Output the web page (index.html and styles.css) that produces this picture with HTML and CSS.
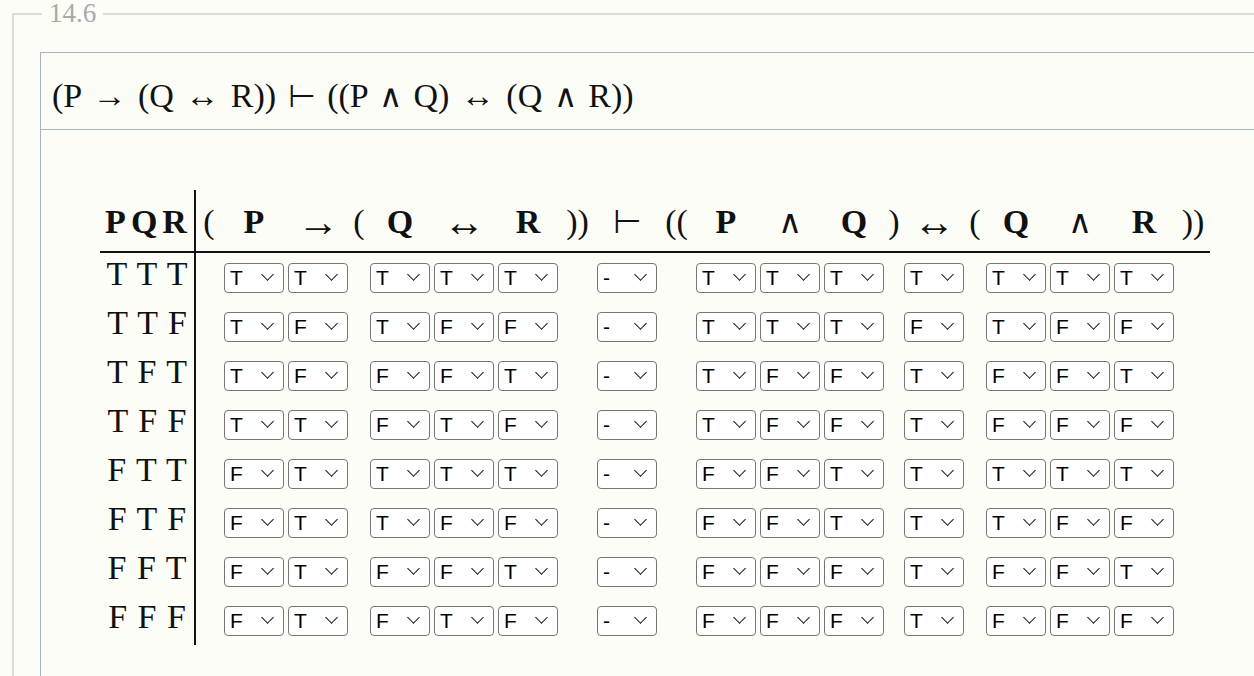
FILE: index.html
```html
<!DOCTYPE html>
<html>
<head>
<meta charset="utf-8">
<link rel="stylesheet" href="styles.css">
</head>
<body>
<fieldset class="problem">
  <legend class="num">14.6</legend>
  <div class="card">
    <div class="card-head">(P → (Q ↔ R)) <span class="sym">⊢</span> ((P <span class="sym">∧</span> Q) ↔ (Q <span class="sym">∧</span> R))</div>
    <div class="card-body">
      <table class="tt">
        <thead>
          <tr>
            <th class="vars">PQR</th>
            <th class="par w26">(</th><th class="l">P</th><th class="arr">→</th>
            <th class="par w18">(</th><th class="l">Q</th><th class="arr">↔</th><th class="l">R</th>
            <th class="par w35">))</th><th class="op">⊢</th>
            <th class="par w35">((</th><th class="l">P</th><th class="op">∧</th><th class="l">Q</th>
            <th class="par w16">)</th><th class="arr">↔</th>
            <th class="par w18">(</th><th class="l">Q</th><th class="op">∧</th><th class="l">R</th>
            <th class="par w34">))</th>
          </tr>
        </thead>
        <tbody>
          <tr>
            <td class="vars">T T T</td>
            <td class="p"></td><td><select><option>T</option><option>F</option></select></td><td><select><option>T</option><option>F</option></select></td>
            <td class="p"></td><td><select><option>T</option><option>F</option></select></td><td><select><option>T</option><option>F</option></select></td><td><select><option>T</option><option>F</option></select></td>
            <td class="p"></td><td><select><option>-</option><option>T</option><option>F</option></select></td>
            <td class="p"></td><td><select><option>T</option><option>F</option></select></td><td><select><option>T</option><option>F</option></select></td><td><select><option>T</option><option>F</option></select></td>
            <td class="p"></td><td><select><option>T</option><option>F</option></select></td>
            <td class="p"></td><td><select><option>T</option><option>F</option></select></td><td><select><option>T</option><option>F</option></select></td><td><select><option>T</option><option>F</option></select></td>
            <td class="p"></td>
          </tr>
          <tr>
            <td class="vars">T T F</td>
            <td class="p"></td><td><select><option>T</option></select></td><td><select><option>F</option></select></td>
            <td class="p"></td><td><select><option>T</option></select></td><td><select><option>F</option></select></td><td><select><option>F</option></select></td>
            <td class="p"></td><td><select><option>-</option></select></td>
            <td class="p"></td><td><select><option>T</option></select></td><td><select><option>T</option></select></td><td><select><option>T</option></select></td>
            <td class="p"></td><td><select><option>F</option></select></td>
            <td class="p"></td><td><select><option>T</option></select></td><td><select><option>F</option></select></td><td><select><option>F</option></select></td>
            <td class="p"></td>
          </tr>
          <tr>
            <td class="vars">T F T</td>
            <td class="p"></td><td><select><option>T</option></select></td><td><select><option>F</option></select></td>
            <td class="p"></td><td><select><option>F</option></select></td><td><select><option>F</option></select></td><td><select><option>T</option></select></td>
            <td class="p"></td><td><select><option>-</option></select></td>
            <td class="p"></td><td><select><option>T</option></select></td><td><select><option>F</option></select></td><td><select><option>F</option></select></td>
            <td class="p"></td><td><select><option>T</option></select></td>
            <td class="p"></td><td><select><option>F</option></select></td><td><select><option>F</option></select></td><td><select><option>T</option></select></td>
            <td class="p"></td>
          </tr>
          <tr>
            <td class="vars">T F F</td>
            <td class="p"></td><td><select><option>T</option></select></td><td><select><option>T</option></select></td>
            <td class="p"></td><td><select><option>F</option></select></td><td><select><option>T</option></select></td><td><select><option>F</option></select></td>
            <td class="p"></td><td><select><option>-</option></select></td>
            <td class="p"></td><td><select><option>T</option></select></td><td><select><option>F</option></select></td><td><select><option>F</option></select></td>
            <td class="p"></td><td><select><option>T</option></select></td>
            <td class="p"></td><td><select><option>F</option></select></td><td><select><option>F</option></select></td><td><select><option>F</option></select></td>
            <td class="p"></td>
          </tr>
          <tr>
            <td class="vars">F T T</td>
            <td class="p"></td><td><select><option>F</option></select></td><td><select><option>T</option></select></td>
            <td class="p"></td><td><select><option>T</option></select></td><td><select><option>T</option></select></td><td><select><option>T</option></select></td>
            <td class="p"></td><td><select><option>-</option></select></td>
            <td class="p"></td><td><select><option>F</option></select></td><td><select><option>F</option></select></td><td><select><option>T</option></select></td>
            <td class="p"></td><td><select><option>T</option></select></td>
            <td class="p"></td><td><select><option>T</option></select></td><td><select><option>T</option></select></td><td><select><option>T</option></select></td>
            <td class="p"></td>
          </tr>
          <tr>
            <td class="vars">F T F</td>
            <td class="p"></td><td><select><option>F</option></select></td><td><select><option>T</option></select></td>
            <td class="p"></td><td><select><option>T</option></select></td><td><select><option>F</option></select></td><td><select><option>F</option></select></td>
            <td class="p"></td><td><select><option>-</option></select></td>
            <td class="p"></td><td><select><option>F</option></select></td><td><select><option>F</option></select></td><td><select><option>T</option></select></td>
            <td class="p"></td><td><select><option>T</option></select></td>
            <td class="p"></td><td><select><option>T</option></select></td><td><select><option>F</option></select></td><td><select><option>F</option></select></td>
            <td class="p"></td>
          </tr>
          <tr>
            <td class="vars">F F T</td>
            <td class="p"></td><td><select><option>F</option></select></td><td><select><option>T</option></select></td>
            <td class="p"></td><td><select><option>F</option></select></td><td><select><option>F</option></select></td><td><select><option>T</option></select></td>
            <td class="p"></td><td><select><option>-</option></select></td>
            <td class="p"></td><td><select><option>F</option></select></td><td><select><option>F</option></select></td><td><select><option>F</option></select></td>
            <td class="p"></td><td><select><option>T</option></select></td>
            <td class="p"></td><td><select><option>F</option></select></td><td><select><option>F</option></select></td><td><select><option>T</option></select></td>
            <td class="p"></td>
          </tr>
          <tr>
            <td class="vars">F F F</td>
            <td class="p"></td><td><select><option>F</option></select></td><td><select><option>T</option></select></td>
            <td class="p"></td><td><select><option>F</option></select></td><td><select><option>T</option></select></td><td><select><option>F</option></select></td>
            <td class="p"></td><td><select><option>-</option></select></td>
            <td class="p"></td><td><select><option>F</option></select></td><td><select><option>F</option></select></td><td><select><option>F</option></select></td>
            <td class="p"></td><td><select><option>T</option></select></td>
            <td class="p"></td><td><select><option>F</option></select></td><td><select><option>F</option></select></td><td><select><option>F</option></select></td>
            <td class="p"></td>
          </tr>
        </tbody>
      </table>
    </div>
  </div>
</fieldset>
</body>
</html>
```
FILE: styles.css
```css
html {
  overflow: hidden;
  background: #fdfdf8;
}
body {
  margin: 0;
  background: #fdfdf8;
  color: #111;
  font-family: "Liberation Serif", "DejaVu Serif", serif;
}
.problem {
  margin: 0 0 0 12px;
  width: 1320px;
  min-height: 700px;
  border: 2px solid #dddddd;
  border-right: none;
  padding: 25px 0 0 26px;
  box-sizing: border-box;
}
.num {
  font-size: 27px;
  line-height: 27px;
  color: #aaaaaa;
  padding: 0 7px;
  margin-left: 2px;
}
.card {
  border: 1px solid #a9b4bf;
  border-right: none;
  background: #fdfdf8;
  min-height: 640px;
}
.card-head {
  font-size: 34px;
  line-height: 38px;
  word-spacing: 3px;
  padding: 24px 11px 14px 11px;
  border-bottom: 1px solid #a9b4bf;
}
.sym {
  font-family: "DejaVu Sans", sans-serif;
  font-weight: 200;
  font-size: 32px;
}
.card-body {
  padding: 60px 0 0 59px;
}
.tt {
  border-collapse: collapse;
  border-spacing: 0;
}
.tt th {
  font-size: 34px;
  font-weight: normal;
  height: 50px;
  vertical-align: bottom;
  padding: 0 2px 11px 2px;
  line-height: 36px;
  white-space: nowrap;
  text-align: center;
  border-bottom: 2px solid #111;
}
.tt th.l { font-weight: bold; }
.tt th.arr { font-size: 42px; font-weight: bold; }
.tt th.op {
  font-family: "DejaVu Sans", sans-serif;
  font-weight: 200;
  font-size: 33px;
}
.tt th.par { padding-left: 0; padding-right: 0; }
.w26 { width: 26px; }
.w18 { width: 18px; }
.w35 { width: 35px; }
.w16 { width: 16px; }
.w34 { width: 34px; }
.tt th.vars {
  width: 94px;
  font-weight: bold;
  letter-spacing: 5px;
  text-indent: 3px;
  border-right: 2px solid #111;
  padding: 0 0 11px 0;
}
.tt td {
  position: relative;
  height: 49px;
  padding: 0 2px;
  vertical-align: middle;
  text-align: center;
}
.tt td::after {
  content: "";
  position: absolute;
  left: 41px;
  top: 17px;
  width: 8px;
  height: 8px;
  border-right: 1.7px solid #111;
  border-bottom: 1.7px solid #111;
  transform: rotate(45deg);
  pointer-events: none;
}
.tt td.p::after,
.tt td.vars::after {
  content: none;
}
.tt td.vars {
  height: 41px;
  font-size: 34px;
  word-spacing: 2px;
  border-right: 2px solid #111;
  padding: 0 0 8px 0;
  line-height: 36px;
  white-space: nowrap;
}
.tt select {
  -webkit-appearance: none;
  appearance: none;
  display: block;
  box-sizing: border-box;
  width: 60px;
  height: 30px;
  padding: 0 0 0 5px;
  font-family: "Liberation Sans", Arial, sans-serif;
  font-size: 21px;
  line-height: 28px;
  color: #000;
  background-color: #fff;
  border: 1px solid #767676;
  border-radius: 4px;
  margin: 0;
}
```
